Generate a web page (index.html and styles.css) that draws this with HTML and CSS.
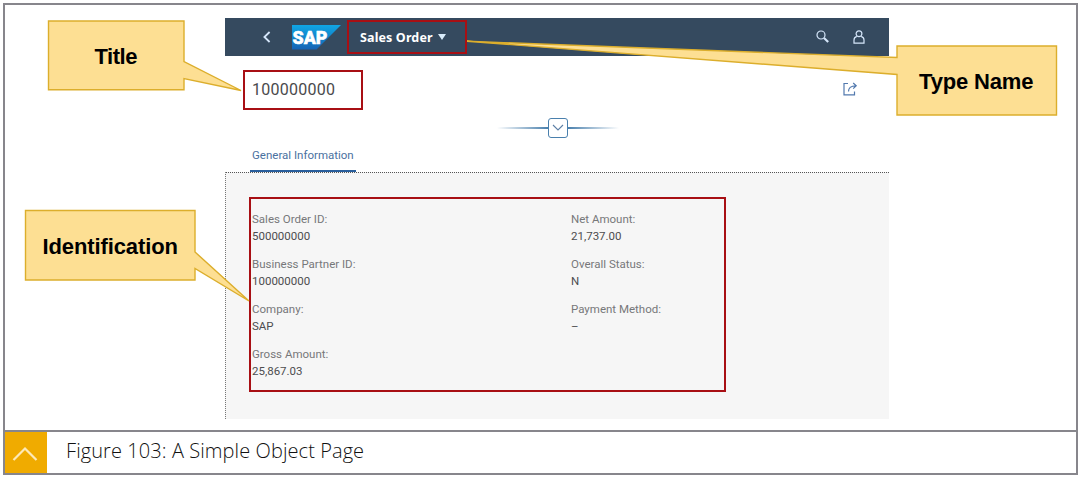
FILE: index.html
```html
<!DOCTYPE html>
<html lang="en">
<head>
<meta charset="utf-8">
<title>A Simple Object Page</title>
<link rel="stylesheet" href="styles.css">
</head>
<body>
<figure class="figure">
  <div class="stage">
    <div class="app">
      <header class="shell">
        <svg class="back" width="8" height="12" viewBox="0 0 8 12"><path d="M6.6 1 1.4 6l5.2 5"/></svg>
        <svg class="logo" width="49" height="25" viewBox="0 0 49 25">
          <defs><linearGradient id="blue" x1="0" y1="0" x2="0" y2="1"><stop offset="0" stop-color="#10a6e4"/><stop offset="1" stop-color="#1463b4"/></linearGradient></defs>
          <path d="M0 0H49L24.5 24.5H0Z" fill="url(#blue)"/>
          <text class="logo-text" x="0.5" y="19" textLength="35" lengthAdjust="spacingAndGlyphs">SAP</text>
        </svg>
        <div class="type">Sales Order<svg width="8" height="6" viewBox="0 0 8 6"><path d="M0 0H8L4 6Z"/></svg></div>
        <div class="tools">
          <svg width="13" height="13" viewBox="0 0 13 13"><circle cx="5" cy="5" r="4"/><path class="handle" d="m8 8 4.2 4"/></svg>
          <svg width="12" height="14" viewBox="0 0 12 14"><circle cx="6" cy="3.8" r="2.9"/><path d="M3.800 6.400C2 7 1 8.300 1 10v3.200h10V10c0-1.700-1-3-2.800-3.600"/></svg>
        </div>
      </header>
      <div class="header">
        <div class="title">100000000</div>
        <svg class="share" width="15" height="14" viewBox="0 0 15 14"><path d="M5 1.500H1v11.300h10.500V9.500M5.500 9.500C5.500 6 7.500 3.800 13 3.800M10.200 1l3 2.800-3 2.800"/></svg>
      </div>
      <div class="expander"><i class="rule"></i><span class="toggle"><svg width="12" height="8" viewBox="0 0 12 8"><path d="m1 1 5 5 5-5"/></svg></span><i class="rule right"></i></div>
      <nav class="tabs"><span class="tab">General Information</span></nav>
      <section class="content">
        <div class="facets">
          <dl>
            <dt>Sales Order ID:</dt><dd>500000000</dd>
            <dt>Business Partner ID:</dt><dd>100000000</dd>
            <dt>Company:</dt><dd>SAP</dd>
            <dt>Gross Amount:</dt><dd>25,867.03</dd>
          </dl>
          <dl>
            <dt>Net Amount:</dt><dd>21,737.00</dd>
            <dt>Overall Status:</dt><dd>N</dd>
            <dt>Payment Method:</dt><dd>–</dd>
          </dl>
        </div>
      </section>
    </div>
  </div>
  <figcaption class="caption">
    <span class="marker"><svg width="26" height="16" viewBox="0 0 26 16"><path d="M1.500 14 13 2.500 24.500 14"/></svg></span>
    <span class="caption-text">Figure 103: A Simple Object Page</span>
  </figcaption>
  <svg class="callouts" width="1079" height="477" viewBox="0 0 1079 477">
    <path d="M48.500 21H184V61.500L241 90.500 184 78.500V89.700H48.500Z"/>
    <path d="M897 46H1056.500V115H897V74.500L467 41.200 897 57.500Z"/>
    <path d="M25.500 210.500H195V252L249 301 195 268.500V280H25.500Z"/>
    <text x="94.500" y="64" textLength="43">Title</text>
    <text x="919" y="89" textLength="114.500">Type Name</text>
    <text x="42.500" y="253.500" textLength="135.500">Identification</text>
  </svg>
</figure>
</body>
</html>
```
FILE: styles.css
```css
* { box-sizing: border-box; }
body { margin: 0; background: #fff; font-family: Roboto, "Open Sans", sans-serif; }
svg { flex: none; display: block; }

.figure {
  width: 1075px;
  height: 472px;
  margin: 3px 0 0 3px;
  border: 2px solid #87868c;
  display: flex;
  flex-direction: column;
}
.stage { height: 427px; padding: 13px 0 0 220px; border-bottom: 2px solid #87868c; }
.app { width: 664px; }

.shell { height: 37.500px; background: #354a5f; display: flex; align-items: center; }
.shell svg { fill: none; stroke: #d5e6fa; stroke-width: 1.200; }
.shell .back { margin-left: 38px; stroke-width: 1.800; }
.shell .logo { margin: 1px 0 0 21px; stroke: none; }
.shell .logo-text { font: 900 19px Roboto, sans-serif; fill: #fff; stroke: #fff; stroke-width: .5; }
.type {
  width: 120px;
  height: 34px;
  margin-left: 6px;
  padding: 1px 0 0 11px;
  border: 2px solid #a80f14;
  display: flex;
  align-items: center;
  gap: 5px;
  color: #fff;
  font: 700 12.500px "Noto Sans", sans-serif;
  letter-spacing: .13px;
  white-space: nowrap;
}
.shell .type svg { fill: #d9ecfb; stroke: none; }
.tools { margin-left: auto; padding-right: 24px; display: flex; align-items: center; gap: 24px; }
.tools .handle { stroke-width: 2.200; }

.header { height: 55px; padding: 14.500px 31px 0 18px; display: flex; justify-content: space-between; }
.title {
  width: 120px;
  height: 40px;
  padding-left: 7px;
  border: 2px solid #a80f14;
  color: #4a4a4c;
  font-size: 16px;
  letter-spacing: .25px;
  line-height: 35px;
}
.share { margin-top: 11.500px; fill: none; stroke: #5279ae; stroke-width: 1.200; }

.expander { height: 35px; padding-left: 2px; display: flex; align-items: center; justify-content: center; }
.rule { width: 51px; height: 1.500px; background: linear-gradient(to right, transparent, #4a80ad); }
.rule.right { background: linear-gradient(to left, transparent, #4a80ad); }
.toggle {
  width: 20px;
  height: 20px;
  border: 1.500px solid #4a80ad;
  border-radius: 3px;
  display: flex;
  align-items: center;
  justify-content: center;
}
.toggle svg { fill: none; stroke: #5c7fa6; stroke-width: 1.100; }

.tabs { height: 26px; padding-left: 25px; display: flex; }
.tab { width: 106px; padding-left: 2px; border-bottom: 2px solid #2a5f9c; color: #4a719f; font-size: 11.500px; line-height: 19px; white-space: nowrap; }

.content { height: 247px; padding: 24px 0 0 23px; background: #f6f6f6; border-top: 1px dotted #555; border-left: 1px dotted #777; }
.facets { width: 477px; height: 195px; padding: 11.500px 1px 0; border: 2px solid #a80f14; display: grid; grid-template-columns: 319px 1fr; align-content: start; }
dl { margin: 0; font-size: 11.500px; }
dt { height: 18px; line-height: 18px; color: #77787a; }
dd { height: 27px; margin: 0; line-height: 16px; color: #4d4d4f; }

.caption { flex: 1; display: flex; align-items: center; }
.marker { width: 42px; height: 100%; background: #f0ab00; display: flex; align-items: center; justify-content: center; }
.marker svg { margin: 3px 2px 0 0; fill: none; stroke: #fde9b8; stroke-width: 2.200; }
.caption-text { margin: -5px 0 0 19px; color: #111; font: 300 20px "Open Sans", sans-serif; letter-spacing: .08px; white-space: nowrap; }

.callouts { position: absolute; left: 0; top: 0; pointer-events: none; }
.callouts path { fill: #fddf93; stroke: #dcae2c; stroke-width: 1.400; }
.callouts text { font: 700 22px "Liberation Sans", Arial, sans-serif; fill: #000; }
```
